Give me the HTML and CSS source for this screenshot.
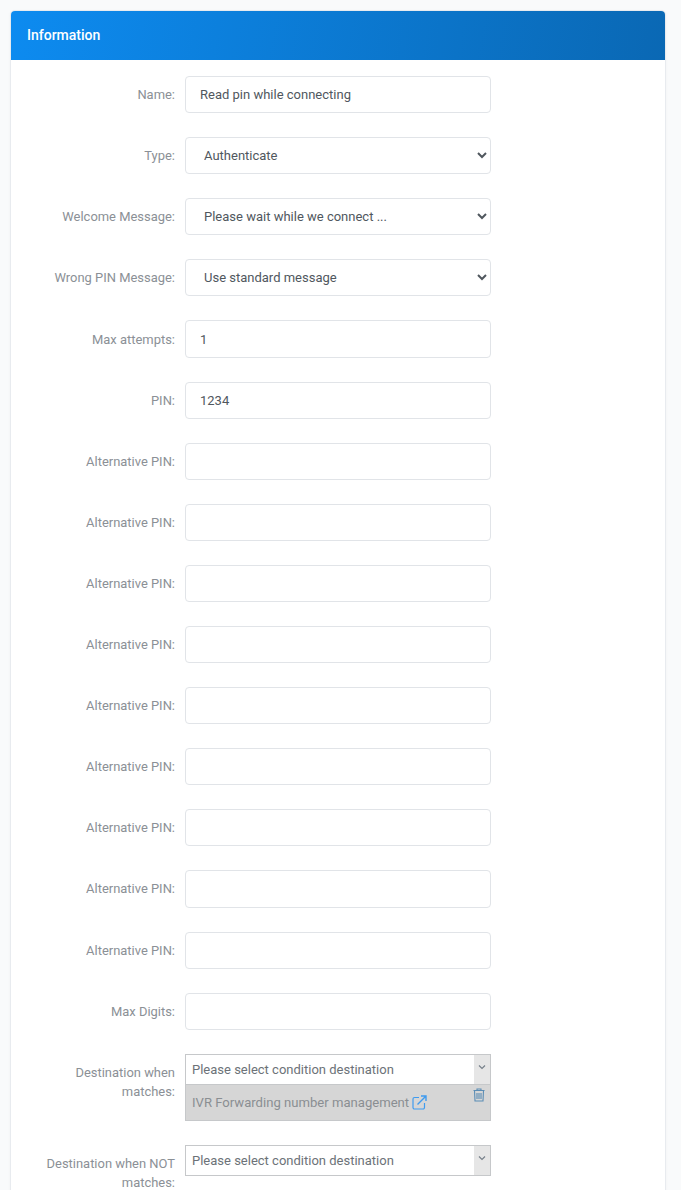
FILE: index.html
```html
<!DOCTYPE html>
<html lang="en">
<head>
<meta charset="utf-8">
<title>Information</title>
<link rel="stylesheet" href="styles.css">
</head>
<body>
<main class="card">
  <header class="card-header">Information</header>
  <form class="card-body">
    <div class="row"><label class="label">Name:</label><input class="control" type="text" value="Read pin while connecting"></div>
    <div class="row"><label class="label">Type:</label><select class="control"><option>Authenticate</option></select></div>
    <div class="row"><label class="label">Welcome Message:</label><select class="control"><option>Please wait while we connect ...</option></select></div>
    <div class="row"><label class="label">Wrong PIN Message:</label><select class="control"><option>Use standard message</option></select></div>
    <div class="row"><label class="label">Max attempts:</label><input class="control" type="text" value="1"></div>
    <div class="row"><label class="label">PIN:</label><input class="control" type="text" value="1234"></div>
    <div class="row"><label class="label">Alternative PIN:</label><input class="control" type="text"></div>
    <div class="row"><label class="label">Alternative PIN:</label><input class="control" type="text"></div>
    <div class="row"><label class="label">Alternative PIN:</label><input class="control" type="text"></div>
    <div class="row"><label class="label">Alternative PIN:</label><input class="control" type="text"></div>
    <div class="row"><label class="label">Alternative PIN:</label><input class="control" type="text"></div>
    <div class="row"><label class="label">Alternative PIN:</label><input class="control" type="text"></div>
    <div class="row"><label class="label">Alternative PIN:</label><input class="control" type="text"></div>
    <div class="row"><label class="label">Alternative PIN:</label><input class="control" type="text"></div>
    <div class="row"><label class="label">Alternative PIN:</label><input class="control" type="text"></div>
    <div class="row"><label class="label">Max Digits:</label><input class="control" type="text"></div>
    <div class="row">
      <label class="label">Destination when matches:</label>
      <div class="dest">
        <div class="dest-select">
          <span class="dest-text">Please select condition destination</span>
          <span class="dest-arrow"><svg width="8" height="6" viewBox="0 0 8 6"><path d="M1 1.500 4 4.500 7 1.500" fill="none" stroke="#77808a" stroke-width="1.200"/></svg></span>
        </div>
        <div class="dest-item">
          <span class="dest-item-text">IVR Forwarding number management</span>
          <svg class="icon-link" width="15" height="15" viewBox="0 0 15 15"><path d="M7 2.500H2.500A1.500 1.500 0 0 0 1 4v8.500A1.500 1.500 0 0 0 2.500 14H11a1.500 1.500 0 0 0 1.500-1.500V8" fill="none" stroke="#3f9bef" stroke-width="1.200"/><path d="M5.500 9.500 13.500 1.500M9 1h5v5" fill="none" stroke="#3f9bef" stroke-width="1.400"/></svg>
          <svg class="icon-trash" width="12" height="14" viewBox="0 0 12 14"><path d="M.5 2.500h11M4 2.500V1h4v1.500M1.500 2.500l.5 10.500h8l.5-10.500M4 5v6M6 5v6M8 5v6" fill="none" stroke="#5b8db5" stroke-width="1.100"/></svg>
        </div>
      </div>
    </div>
    <div class="row">
      <label class="label">Destination when NOT matches:</label>
      <div class="dest">
        <div class="dest-select">
          <span class="dest-text">Please select condition destination</span>
          <span class="dest-arrow"><svg width="8" height="6" viewBox="0 0 8 6"><path d="M1 1.500 4 4.500 7 1.500" fill="none" stroke="#77808a" stroke-width="1.200"/></svg></span>
        </div>
      </div>
    </div>
  </form>
</main>
</body>
</html>
```
FILE: styles.css
```css
* { box-sizing: border-box; }
html, body { height: 1190px; overflow: hidden; }
body {
  margin: 0;
  padding: 11px 16px 0 11px;
  background: #f9fafb;
  font-family: Roboto, "Liberation Sans", sans-serif;
  font-size: 13px;
  line-height: 19.5px;
  color: #495057;
}
.card {
  background: #fff;
  border-radius: 4px;
  box-shadow: 0 0 0 1px #e8ebef, 0 1px 4px rgba(0, 0, 0, .06);
}
.card-header {
  height: 49px;
  padding: 14px 16px 0;
  border-radius: 4px 4px 0 0;
  background: linear-gradient(100deg, #0d8bf0 0%, #0a68b4 100%);
  color: #fff;
  font-size: 14px;
  font-weight: 500;
  line-height: 20px;
}
.card-body { padding: 16px 0 0; }
.row {
  display: flex;
  align-items: flex-start;
  gap: 10px;
  margin-bottom: 24px;
}
.label {
  flex: 0 0 164px;
  padding: 9.0625px 0 0 24px;
  text-align: right;
  color: #8b9096;
  font-size: 12.95px;
}
.control {
  flex: 0 0 306px;
  height: 37.11px;
  padding: 0 14px;
  border: 1px solid #e1e4e8;
  border-radius: 4px;
  background: #fff;
  color: #50575e;
  font: 13px Roboto, "Liberation Sans", sans-serif;
  outline: none;
}
input.control { padding-top: .125px; }
.dest {
  flex: 0 0 306px;
  border: 1px solid #c6c8ca;
}
.dest-select {
  display: flex;
  height: 29px;
  background: #fff;
}
.dest-text {
  flex: 1;
  padding: 5px 6px 0;
  line-height: 19px;
  color: #6c7278;
}
.dest-arrow {
  flex: 0 0 16px;
  display: flex;
  justify-content: center;
  padding-top: 9px;
  background: #e6e6e6;
}
.dest-arrow svg { display: block; }
.dest-item {
  position: relative;
  display: flex;
  align-items: center;
  height: 36px;
  padding: 0 6px;
  border-top: 1px solid #c6c8ca;
  background: #d6d6d6;
  color: #8a8e92;
  font-size: 13.1px;
}
.icon-link { margin-left: 3px; }
.icon-trash { position: absolute; top: 3px; right: 5px; }
```
